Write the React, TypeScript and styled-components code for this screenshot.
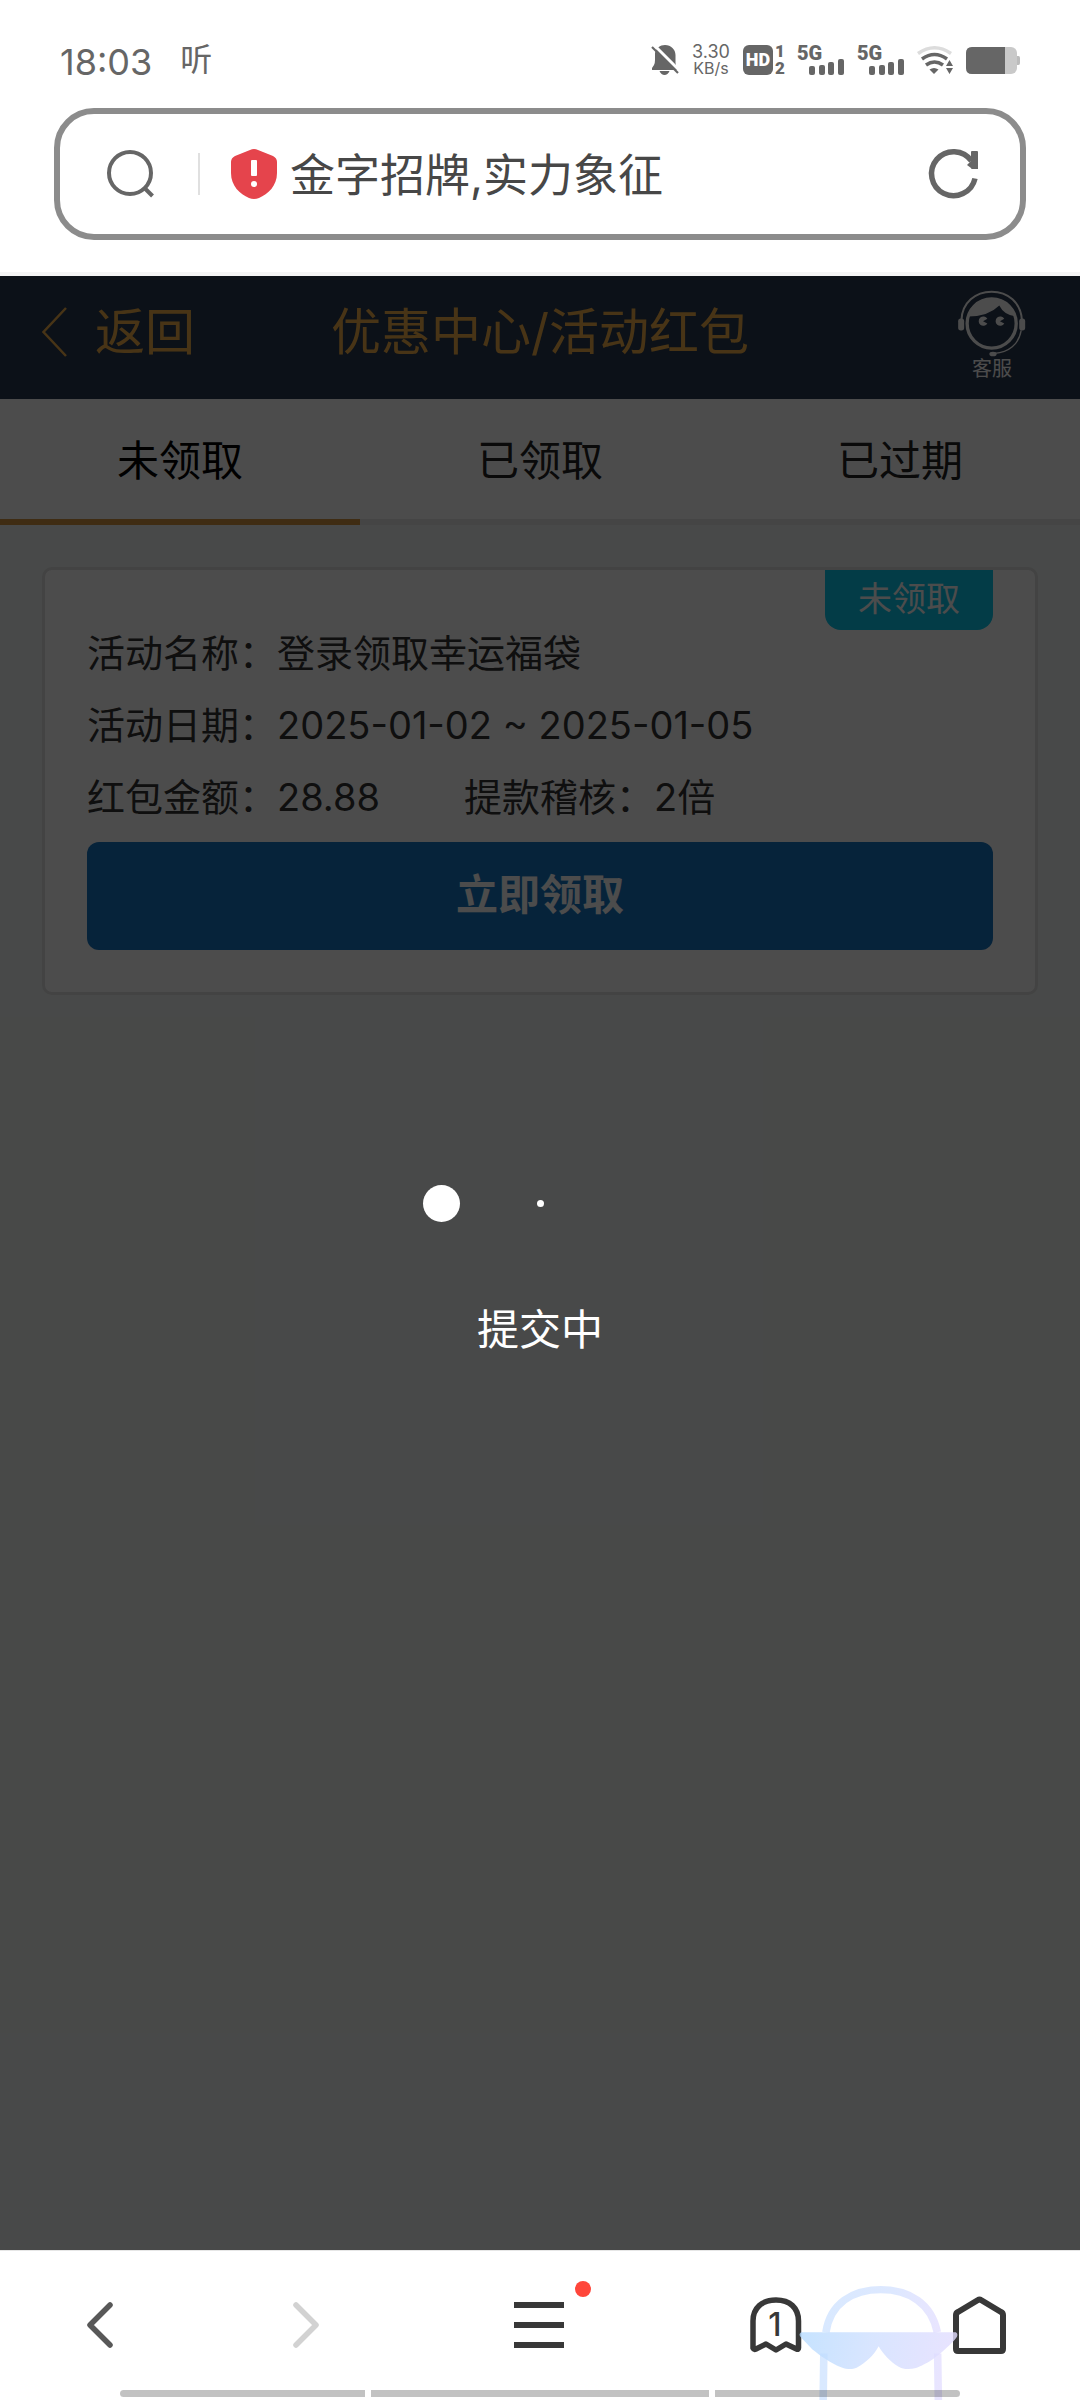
import React from 'react';
import styled, { createGlobalStyle } from 'styled-components';

const FONT = '"Inter", "Noto Sans CJK SC", sans-serif';

const GlobalStyle = createGlobalStyle`
  *, *::before, *::after { box-sizing: border-box; }
  body { margin: 0; font-family: ${FONT}; background: #fff; }
  button, input { font: inherit; color: inherit; border: 0; padding: 0; margin: 0; background: none; outline: 0; }
  button { cursor: pointer; }
  svg { display: block; flex: none; overflow: visible; }
`;

const Screen = styled.div`
  min-height: 100vh;
  display: flex;
  flex-direction: column;
`;

/* Status bar */

const StatusBar = styled.div`
  height: 108px;
  padding: 12px 60px 0;
  display: flex;
  align-items: center;
  color: #666;
`;

const Clock = styled.time`
  font-size: 36px;
  line-height: 48px;
  margin-right: 28px;
  padding-top: 4px;
`;

const ListenMark = styled.span`
  font-size: 32px;
  line-height: 48px;
`;

const StatusIcons = styled.div`
  margin-left: auto;
  display: flex;
  align-items: center;
  gap: 12px;
`;

const NetSpeed = styled.div`
  display: flex;
  flex-direction: column;
  align-items: center;
  width: 40px;
  line-height: 16px;
  font-size: 18px;
`;

const SpeedUnit = styled.span`
  font-size: 16px;
`;

const HdGroup = styled.div`
  display: flex;
  align-items: center;
  gap: 2px;
  font-family: Roboto, sans-serif;
  font-weight: 900;
`;

const HdBox = styled.span`
  width: 30px;
  height: 30px;
  border-radius: 6px;
  background: #666;
  color: #fff;
  font-size: 18px;
  line-height: 30px;
  text-align: center;
`;

const SimNumbers = styled.span`
  display: flex;
  flex-direction: column;
  width: 10px;
  font-size: 17px;
  line-height: 17px;
`;

const SignalGroup = styled.div`
  width: 48px;
  height: 30px;
  display: grid;
`;

const SignalLabel = styled.span`
  grid-area: 1 / 1;
  font-family: Roboto, sans-serif;
  font-size: 20px;
  font-weight: 900;
  line-height: 16px;
`;

const SignalBars = styled.svg`
  grid-area: 1 / 1;
  align-self: end;
  justify-self: end;
`;

/* Browser address bar */

const AddressArea = styled.header`
  padding: 0 54px 32px;
  border-bottom: 4px solid #f5f5f5;
`;

const AddressBar = styled.form`
  height: 132px;
  border: 6px solid #8c8c8c;
  border-radius: 40px;
  padding: 0 42px 0 47px;
  display: flex;
  align-items: center;
`;

const Divider = styled.span`
  width: 2px;
  height: 42px;
  margin: 0 31px 0 43px;
  background: #e0e0e0;
`;

const AddressInput = styled.input`
  flex: 1;
  min-width: 0;
  margin-left: 13px;
  padding-top: 4px;
  font-size: 45px;
  line-height: 60px;
  color: #474747;
`;

/* Web page */

const WebPage = styled.main`
  position: relative;
  flex: 1;
  background: #f0f6f3;
`;

const PageHeader = styled.div`
  height: 123px;
  padding: 0 42px;
  display: grid;
  grid-template-columns: 1fr auto 1fr;
  align-items: center;
  background: #2b3950;
  color: #f0b04a;
`;

const BackButton = styled.button`
  justify-self: start;
  display: flex;
  align-items: center;
  gap: 28px;
  padding-bottom: 12px;
  font-size: 50px;
  line-height: 60px;
`;

const PageTitle = styled.h1`
  margin: 0;
  padding-bottom: 12px;
  font-size: 50px;
  font-weight: 400;
  line-height: 60px;
`;

const ServiceButton = styled.button`
  justify-self: end;
  display: flex;
  flex-direction: column;
  align-items: center;
  padding: 0 12px 4px 0;
  font-size: 20px;
  line-height: 24px;
  color: #fff;
`;

const Tabs = styled.div`
  display: grid;
  grid-template-columns: repeat(3, 1fr);
  background: #fff;
`;

const Tab = styled.button<{ $active?: boolean }>`
  height: 126px;
  padding-bottom: 4px;
  border-bottom: 6px solid ${(p) => (p.$active ? '#d39542' : '#e6e6e6')};
  font-size: 42px;
  color: ${(p) => (p.$active ? '#000' : '#222')};
`;

const Card = styled.article`
  position: relative;
  margin: 42px;
  padding: 47px 42px 42px;
  border: 3px solid #e0e0e0;
  border-radius: 10px;
  background: #fff;
`;

const Badge = styled.span`
  position: absolute;
  top: 0;
  right: 42px;
  height: 60px;
  padding: 0 33px;
  border-radius: 0 0 16px 16px;
  background: #0ac8ed;
  color: #fff;
  font-size: 34px;
  line-height: 58px;
`;

const Details = styled.dl`
  margin: 0 0 9px;
`;

const Row = styled.div`
  display: flex;
  gap: 84px;
  font-size: 38px;
  line-height: 72px;
  color: #333;
`;

const Field = styled.div`
  display: flex;
`;

const Term = styled.dt`
  white-space: nowrap;
`;

const Value = styled.dd`
  margin: 0;
`;

const ClaimButton = styled.button`
  display: block;
  width: 100%;
  height: 108px;
  padding-bottom: 10px;
  border-radius: 12px;
  background: #1775c1;
  color: #fff;
  font-size: 42px;
  font-weight: 700;
`;

const LoadingOverlay = styled.div`
  position: absolute;
  inset: 0;
  display: flex;
  flex-direction: column;
  align-items: center;
  justify-content: center;
  gap: 64px;
  padding-top: 4px;
  background: rgba(0, 0, 0, 0.7);
  color: #fff;
  font-size: 42px;
  line-height: 60px;
`;

const Dots = styled.div`
  width: 234px;
  height: 66px;
  display: grid;
  grid-template-columns: 37px 1fr 37px;
  align-items: center;
  justify-items: center;
`;

const Dot = styled.span<{ $size: number }>`
  width: ${(p) => p.$size}px;
  height: ${(p) => p.$size}px;
  border-radius: 50%;
  background: #fff;
`;

/* Browser toolbar */

const Toolbar = styled.nav`
  position: relative;
  height: 150px;
  padding: 0 8px 2px 0;
  display: grid;
  grid-template-columns: 200fr 212fr 254fr 220fr 186fr;
  border-top: 1px solid #e6e6e6;
  background: #fff;
`;

const ToolButton = styled.button`
  display: flex;
  align-items: center;
  justify-content: center;
  color: #383838;
`;

const MenuIcon = styled.span`
  position: relative;
`;

const Notice = styled.span`
  position: absolute;
  top: -21px;
  right: -27px;
  width: 16px;
  height: 16px;
  border-radius: 50%;
  background: #ff463a;
`;

const Mascot = styled.svg`
  position: absolute;
  right: 122px;
  bottom: 0;
  overflow: hidden;
  pointer-events: none;
`;

const GestureHints = styled.div`
  position: absolute;
  left: 120px;
  right: 120px;
  bottom: 3px;
  height: 7px;
  display: grid;
  grid-template-columns: 245fr 338fr 245fr;
  gap: 6px;
  border-radius: 4px;
  overflow: hidden;
`;

const Hint = styled.span`
  background: rgba(0, 0, 0, 0.24);
`;

const MutedBell = () => (
  <svg width="28" height="30" viewBox="0 0 28 30" fill="#666" aria-hidden="true">
    <path d="M4 8C5 3 9 0 14 0c6 0 10.500 4.500 10.500 10v8q0 3 2 5v2H1v-2l2-3q1-2 1-5Z" />
    <path d="M8.500 26h10c-1 2.500-3 4-5 4s-4-1.500-5-4Z" />
    <path d="m0-3 31 31" stroke="#fff" strokeWidth="3" />
    <path d="m1 2 26 26" stroke="#666" strokeWidth="2.200" />
  </svg>
);

const HdBadge = () => (
  <HdGroup>
    <HdBox>HD</HdBox>
    <SimNumbers>
      <span>1</span>
      <span>2</span>
    </SimNumbers>
  </HdGroup>
);

const Signal = () => (
  <SignalGroup>
    <SignalLabel>5G</SignalLabel>
    <SignalBars width="36" height="16" viewBox="0 0 36 16" fill="#666" aria-hidden="true">
      <rect x="0" y="7" width="6" height="9" rx="2" />
      <rect x="10" y="6" width="6" height="10" rx="2" />
      <rect x="19" y="3" width="6" height="13" rx="2" />
      <rect x="29" y="0" width="6" height="16" rx="2" />
    </SignalBars>
  </SignalGroup>
);

const Wifi = () => (
  <svg width="37" height="28" viewBox="0 0 37 28" fill="none" stroke="#666" strokeWidth="3.500" aria-hidden="true">
    <path d="M1 7.500Q17.500-4 34 7.500" stroke="#dcdcdc" />
    <path d="M5 13q12.500-9 25 0" />
    <path d="M9 19q8.500-6 17 0" />
    <path d="M12.500 23.500q4.500-3 9 0l-4.500 4.500Z" fill="#666" stroke="none" />
    <path d="m32.500 14 3.500 6h-7Zm0 14 3.500-6h-7Z" fill="#666" stroke="none" />
  </svg>
);

const Battery = () => (
  <svg width="54" height="27" viewBox="0 0 54 27" aria-hidden="true">
    <rect width="51" height="27" rx="6" fill="#c9c9c9" />
    <path d="M51 9h1.500q1.500 0 1.500 2v5q0 2-1.500 2H51Z" fill="#bbb" />
    <path d="M6 0h33v27H6q-6 0-6-6V6q0-6 6-6Z" fill="#666" />
  </svg>
);

const SearchIcon = () => (
  <svg width="48" height="48" viewBox="0 0 48 48" fill="none" stroke="#666" strokeWidth="4" aria-hidden="true">
    <circle cx="23" cy="23" r="21" />
    <path d="m37.500 38 8 8" />
  </svg>
);

const ShieldAlert = () => (
  <svg width="46" height="50" viewBox="0 0 46 50" aria-hidden="true">
    <path d="M19 1q4-2 8 0l15 6q4 2 4 6v11c0 13-9 21-18 25q-5 2-10 0C9 45 0 37 0 24V13q0-4 4-6Z" fill="#e5444c" />
    <rect x="20" y="11" width="6" height="16" rx="1" fill="#fff" />
    <circle cx="23" cy="35" r="3" fill="#fff" />
  </svg>
);

const ReloadIcon = () => (
  <svg width="49" height="50" viewBox="0 0 49 50" fill="none" stroke="#666" strokeWidth="5.500" aria-hidden="true">
    <path d="M46 29.500A22 22 0 1 1 42.500 12" />
    <path d="M42 3q0-1 1-1h5q1 0 1 1v17H43q-1 0-1-1l-4-3 4-4Z" fill="#666" stroke="none" />
  </svg>
);

const Headset = () => (
  <svg width="68" height="67" viewBox="58 58 204 202" fill="none" stroke="currentColor" aria-hidden="true">
    <path d="M68 148C70 96 110 63 159 63s88 33 91 85" strokeWidth="6" />
    <rect x="58" y="144" width="18" height="36" rx="8" fill="currentColor" stroke="none" />
    <rect x="242" y="144" width="18" height="36" rx="8" fill="currentColor" stroke="none" />
    <circle cx="159" cy="159" r="74" strokeWidth="10" />
    <path d="M86 138c8-36 40-56 73-56s65 21 73 56q-36-4-50-33-34 34-96 33Z" fill="currentColor" stroke="none" />
    <path d="M133 152l13-7a14 14 0 1 0 0 14ZM184 152l13-7a14 14 0 1 0 0 14Z" fill="currentColor" stroke="none" />
    <path d="M248 180c-7 42-38 66-80 69" strokeWidth="4" />
    <ellipse cx="163" cy="251" rx="11" ry="7" fill="currentColor" stroke="none" />
  </svg>
);

const Chevron = () => (
  <svg width="25" height="50" viewBox="0 0 25 50" fill="none" stroke="currentColor" strokeWidth="2.500" aria-hidden="true">
    <path d="M24 1 1.500 25 24 49" />
  </svg>
);

const Arrow = ({ forward = false }: { forward?: boolean }) => (
  <svg width="28" height="48" viewBox="0 0 28 48" fill="none" stroke={forward ? '#d2d2d2' : '#585858'} strokeWidth="5.500" strokeLinecap="round" strokeLinejoin="round" aria-hidden="true">
    <path d={forward ? 'M4 4l20 20L4 44' : 'M24 4 4 24l20 20'} />
  </svg>
);

const Hamburger = () => (
  <svg width="50" height="46" viewBox="0 0 50 46" fill="currentColor" aria-hidden="true">
    <path d="M0 0h50v6H0zM0 20h50v6H0zM0 40h50v6H0z" />
  </svg>
);

const TabsGhost = () => (
  <svg width="52" height="56" viewBox="0 0 52 56" aria-hidden="true" fontFamily="Inter, sans-serif">
    <path d="M3 51V24C3 11 12 3 26 3s22.500 8 22.500 21v27q0 2-2 1l-10.500-5-10 6-10-6-10 5q-2 1-3-1Z" fill="none" stroke="currentColor" strokeWidth="5.500" strokeLinejoin="round" />
    <text x="25" y="39" textAnchor="middle" fontSize="32" fontWeight="500" fill="currentColor">1</text>
  </svg>
);

const House = () => (
  <svg width="53" height="58" viewBox="0 0 53 58" fill="none" stroke="currentColor" strokeWidth="6" strokeLinejoin="round" aria-hidden="true">
    <path d="M3 19q0-2 2-3L25 4q1.500-1 3 0l20 12q2 1 2 3v34q0 2-2 2H5q-2 0-2-2Z" />
  </svg>
);

const MascotMark = () => (
  <Mascot width="159" height="114" viewBox="751 197 461 343" preserveAspectRatio="none" aria-hidden="true">
    <defs>
      <linearGradient id="lens" gradientUnits="userSpaceOnUse" x1="760" y1="340" x2="1200" y2="440">
        <stop offset="0" stopColor="#b8dcff" />
        <stop offset="0.45" stopColor="#cfdfff" />
        <stop offset="1" stopColor="#e3dcff" />
      </linearGradient>
      <linearGradient id="frame" gradientUnits="userSpaceOnUse" x1="820" y1="0" x2="1160" y2="0">
        <stop offset="0" stopColor="#d9e9ff" />
        <stop offset="0.6" stopColor="#dde8ff" />
        <stop offset="1" stopColor="#e9e5ff" />
      </linearGradient>
    </defs>
    <path d="M829 336C842 250 905 208 988 208S1135 250 1152 336M823 400 821 540M1153 400 1155 540" fill="none" stroke="url(#frame)" strokeWidth="22" />
    <path d="M757 336h449q10 8-3 22c-23 27-43 42-61 57-12 10-42 25-52 29-18 5-38 4-50-4-25-16-45-38-58-62-14 27-37 49-64 65-13 6-28 5-43-1-35-13-65-38-85-54l-33-36q-9-9 0-16Z" fill="url(#lens)" fillOpacity="0.8" />
  </Mascot>
);

const tabs = ['未领取', '已领取', '已过期'];

const rows = [
  [{ label: '活动名称', value: '登录领取幸运福袋' }],
  [{ label: '活动日期', value: '2025-01-02 ~ 2025-01-05' }],
  [
    { label: '红包金额', value: '28.88' },
    { label: '提款稽核', value: '2倍' },
  ],
];

export default function App() {
  return (
    <Screen lang="zh-CN">
      <GlobalStyle />
      <StatusBar>
        <Clock>18:03</Clock>
        <ListenMark>听</ListenMark>
        <StatusIcons>
          <MutedBell />
          <NetSpeed>
            <span>3.30</span>
            <SpeedUnit>KB/s</SpeedUnit>
          </NetSpeed>
          <HdBadge />
          <Signal />
          <Signal />
          <Wifi />
          <Battery />
        </StatusIcons>
      </StatusBar>

      <AddressArea>
        <AddressBar onSubmit={(e) => e.preventDefault()}>
          <SearchIcon />
          <Divider />
          <ShieldAlert />
          <AddressInput aria-label="地址栏" defaultValue="金字招牌,实力象征" />
          <button type="button" aria-label="刷新">
            <ReloadIcon />
          </button>
        </AddressBar>
      </AddressArea>

      <WebPage>
        <PageHeader>
          <BackButton>
            <Chevron />
            返回
          </BackButton>
          <PageTitle>优惠中心/活动红包</PageTitle>
          <ServiceButton>
            <Headset />
            客服
          </ServiceButton>
        </PageHeader>
        <Tabs role="tablist">
          {tabs.map((name, i) => (
            <Tab key={name} role="tab" aria-selected={i === 0} $active={i === 0}>
              {name}
            </Tab>
          ))}
        </Tabs>
        <Card>
          <Badge>未领取</Badge>
          <Details>
            {rows.map((fields, i) => (
              <Row key={i}>
                {fields.map((f) => (
                  <Field key={f.label}>
                    <Term>{f.label}{'\uFF1A'}</Term>
                    <Value>{f.value}</Value>
                  </Field>
                ))}
              </Row>
            ))}
          </Details>
          <ClaimButton>立即领取</ClaimButton>
        </Card>
        <LoadingOverlay role="status">
          <Dots>
            <Dot $size={37} />
            <Dot $size={7} />
          </Dots>
          提交中
        </LoadingOverlay>
      </WebPage>

      <Toolbar>
        <ToolButton aria-label="后退">
          <Arrow />
        </ToolButton>
        <ToolButton aria-label="前进">
          <Arrow forward />
        </ToolButton>
        <ToolButton aria-label="菜单">
          <MenuIcon>
            <Hamburger />
            <Notice />
          </MenuIcon>
        </ToolButton>
        <ToolButton aria-label="标签页">
          <TabsGhost />
        </ToolButton>
        <ToolButton aria-label="主页">
          <House />
        </ToolButton>
        <MascotMark />
        <GestureHints>
          <Hint />
          <Hint />
          <Hint />
        </GestureHints>
      </Toolbar>
    </Screen>
  );
}
